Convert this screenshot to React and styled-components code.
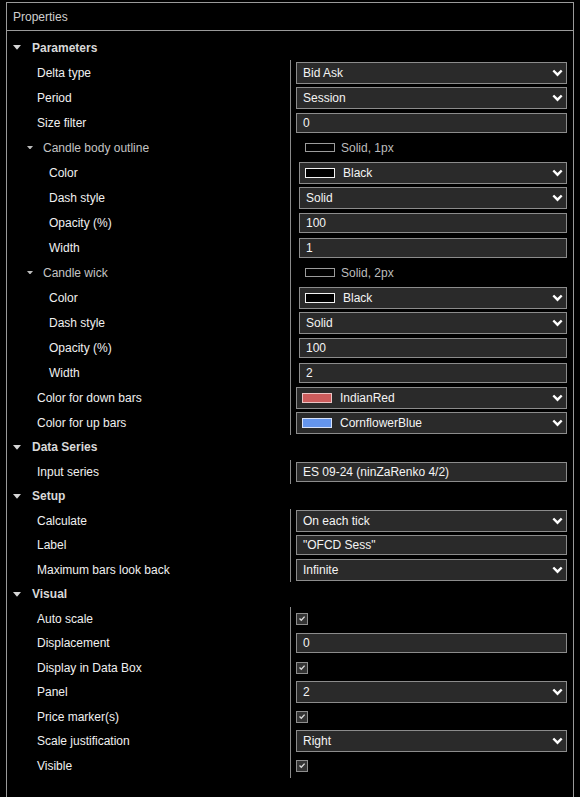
import React from 'react'
import styled, { createGlobalStyle } from 'styled-components'

const GlobalStyle = createGlobalStyle`
  html, body {
    margin: 0;
    padding: 0;
    background: #000;
    overflow: hidden;
  }
  body {
    font-family: "Liberation Sans", Arial, sans-serif;
    font-size: 12px;
    color: #efefef;
  }
`

const groups = [
  {
    title: 'Parameters',
    rowHeight: 25,
    rows: [
      { label: 'Delta type', type: 'select', value: 'Bid Ask' },
      { label: 'Period', type: 'select', value: 'Session' },
      { label: 'Size filter', type: 'text', value: '0' },
      {
        label: 'Candle body outline', type: 'sub', preview: 'Solid, 1px',
        rows: [
          { label: 'Color', type: 'color', value: 'Black', color: '#000', edge: '#f4f4f4' },
          { label: 'Dash style', type: 'select', value: 'Solid' },
          { label: 'Opacity (%)', type: 'text', value: '100' },
          { label: 'Width', type: 'text', value: '1' },
        ],
      },
      {
        label: 'Candle wick', type: 'sub', preview: 'Solid, 2px',
        rows: [
          { label: 'Color', type: 'color', value: 'Black', color: '#000', edge: '#f4f4f4' },
          { label: 'Dash style', type: 'select', value: 'Solid' },
          { label: 'Opacity (%)', type: 'text', value: '100' },
          { label: 'Width', type: 'text', value: '2' },
        ],
      },
      { label: 'Color for down bars', type: 'color', value: 'IndianRed', color: '#cd5c5c', edge: '#ecc4c4' },
      { label: 'Color for up bars', type: 'color', value: 'CornflowerBlue', color: '#6495ed', edge: '#d6e2fa' },
    ],
  },
  {
    title: 'Data Series',
    rowHeight: 24.5,
    rows: [{ label: 'Input series', type: 'text', value: 'ES 09-24 (ninZaRenko 4/2)' }],
  },
  {
    title: 'Setup',
    rowHeight: 24.5,
    rows: [
      { label: 'Calculate', type: 'select', value: 'On each tick' },
      { label: 'Label', type: 'text', value: '"OFCD Sess"' },
      { label: 'Maximum bars look back', type: 'select', value: 'Infinite' },
    ],
  },
  {
    title: 'Visual',
    rowHeight: 24.5,
    rows: [
      { label: 'Auto scale', type: 'check' },
      { label: 'Displacement', type: 'text', value: '0' },
      { label: 'Display in Data Box', type: 'check' },
      { label: 'Panel', type: 'select', value: '2' },
      { label: 'Price marker(s)', type: 'check' },
      { label: 'Scale justification', type: 'select', value: 'Right' },
      { label: 'Visible', type: 'check' },
    ],
  },
]

const Caret = ({ size = 8, color = '#d6d6d6' }) => (
  <svg width={size} height={size * 0.6} viewBox="0 0 10 6">
    <polygon points="0,0 10,0 5,6" fill={color} />
  </svg>
)

const Chevron = () => (
  <svg width="11" height="8" viewBox="0 0 11 8">
    <polyline points="1.3,1.5 5.5,5.7 9.7,1.5" fill="none" stroke="#fff" strokeWidth="2.4" />
  </svg>
)

const Tick = () => (
  <svg width="8" height="7" viewBox="0 0 8 7">
    <polyline points="1.5,3.5 3.3,5.2 6.6,1.6" fill="none" stroke="#d8d8d8" strokeWidth="1.4" />
  </svg>
)

export default function App() {
  const renderValue = (row) => {
    switch (row.type) {
      case 'select':
        return (
          <Select>
            <span>{row.value}</span>
            <Arrow><Chevron /></Arrow>
          </Select>
        )
      case 'color':
        return (
          <Select>
            <Swatch $fill={row.color} $edge={row.edge} />
            <span>{row.value}</span>
            <Arrow><Chevron /></Arrow>
          </Select>
        )
      case 'text':
        return <TextBox>{row.value}</TextBox>
      case 'check':
        return <Check><Tick /></Check>
      default:
        return null
    }
  }

  const renderRow = (row, h, nested, key) => {
    if (row.type === 'sub') {
      return (
        <React.Fragment key={key}>
          <Row $h={h}>
            <LabelCell $pad={20}>
              <CaretWrap $gap={10}><Caret size={6} color="#bdbdbd" /></CaretWrap>
              <SubTitle>{row.label}</SubTitle>
            </LabelCell>
            <ValueCell $nested>
              <Preview>
                <PreviewLine />
                <span>{row.preview}</span>
              </Preview>
            </ValueCell>
          </Row>
          {row.rows.map((r, i) => renderRow(r, h, true, key + '-' + i))}
        </React.Fragment>
      )
    }
    return (
      <Row key={key} $h={h}>
        <LabelCell $pad={nested ? 42 : 30}>{row.label}</LabelCell>
        <ValueCell $nested={nested}>{renderValue(row)}</ValueCell>
      </Row>
    )
  }

  return (
    <>
      <GlobalStyle />
      <Frame>
        <TitleBar>Properties</TitleBar>
        <Body>
          {groups.map((g, gi) => (
            <section key={g.title}>
              <HeaderRow $h={g.rowHeight}>
                <CaretWrap $gap={11}><Caret /></CaretWrap>
                <GroupTitle>{g.title}</GroupTitle>
              </HeaderRow>
              {g.rows.map((r, i) => renderRow(r, g.rowHeight, false, gi + '-' + i))}
            </section>
          ))}
        </Body>
      </Frame>
    </>
  )
}

const Frame = styled.div`
  margin: 2px 0 0 6px;
  width: 568px;
  min-height: 820px;
  box-sizing: border-box;
  border: 1px solid #9a9a9a;
  border-bottom: none;
`

const TitleBar = styled.div`
  height: 27px;
  display: flex;
  align-items: center;
  padding-left: 6px;
  color: #cfcfcf;
  border-bottom: 1px solid #9a9a9a;
`

const Body = styled.div`
  padding-top: 4px;
`

const HeaderRow = styled.div`
  height: ${p => p.$h}px;
  display: flex;
  align-items: center;
  padding-left: 6px;
`

const CaretWrap = styled.span`
  display: flex;
  align-items: center;
  margin-right: ${p => p.$gap}px;
`

const GroupTitle = styled.span`
  font-weight: bold;
  color: #d9d9d9;
`

const SubTitle = styled.span`
  color: #c4c4c4;
`

const Row = styled.div`
  display: grid;
  grid-template-columns: 284px 1fr;
  height: ${p => p.$h}px;
`

const LabelCell = styled.div`
  box-sizing: border-box;
  display: flex;
  align-items: center;
  padding-left: ${p => p.$pad}px;
  border-right: 1px solid #8a8a8a;
  color: #f0f0f0;
  white-space: nowrap;
`

const ValueCell = styled.div`
  display: flex;
  align-items: center;
  padding: 0 6px 0 ${p => (p.$nested ? 8 : 5)}px;
  min-width: 0;
`

const Select = styled.div`
  flex: 1;
  height: 22px;
  box-sizing: border-box;
  display: flex;
  align-items: center;
  gap: 8px;
  padding: 0 3px 0 6px;
  border: 1px solid #8c8c8c;
  background: #2a2a2a;
  color: #f4f4f4;
  white-space: nowrap;
`

const Arrow = styled.span`
  display: flex;
  margin-left: auto;
`

const TextBox = styled.div`
  flex: 1;
  height: 20px;
  box-sizing: border-box;
  display: flex;
  align-items: center;
  padding-left: 6px;
  border: 1px solid #8c8c8c;
  background: #2a2a2a;
  color: #f4f4f4;
  white-space: nowrap;
`

const Swatch = styled.span`
  width: 30px;
  height: 10px;
  box-sizing: border-box;
  margin-left: -1px;
  background: ${p => p.$fill};
  border: 1px solid ${p => p.$edge};
  flex: none;
`

const Check = styled.div`
  width: 12px;
  height: 12px;
  box-sizing: border-box;
  display: flex;
  align-items: center;
  justify-content: center;
  border: 1px solid #8e8e8e;
  background: #343434;
`

const Preview = styled.div`
  display: flex;
  align-items: center;
  gap: 6px;
  padding-left: 6px;
  color: #bdbdbd;
`

const PreviewLine = styled.span`
  width: 30px;
  height: 9px;
  box-sizing: border-box;
  border: 1px solid #9c9c9c;
  background: #000;
`
